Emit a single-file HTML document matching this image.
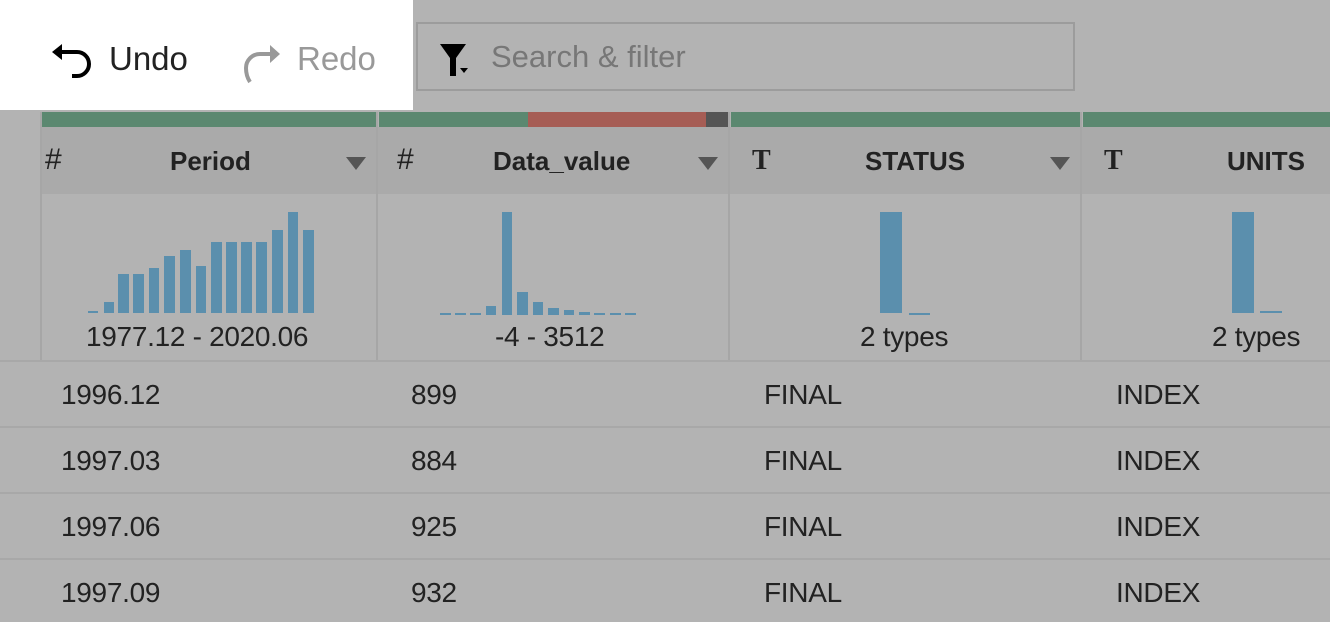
<!DOCTYPE html>
<html><head><style>
*{margin:0;padding:0;box-sizing:border-box}
body{width:1330px;height:622px;overflow:hidden;background:#b3b3b3;font-family:"Liberation Sans",sans-serif;position:relative;color:#222}
.abs{position:absolute}
.top{left:0;top:0;width:413px;height:110px;background:#fff}
.search{left:416px;top:22px;width:659px;height:69px;border:2px solid #9c9c9c}
.bar{top:112px;height:15px}
.hdr{top:127px;height:67px;background:#aaaaaa}
.vl{width:2px;background:#a6a6a6}
.hl{height:2px;background:#a8a8a8;left:0;width:1330px}
.t{font-size:26px;white-space:nowrap}
.r{font-size:28px;white-space:nowrap;letter-spacing:-0.3px}
.b{font-weight:bold}
.h{font-size:30px}
.tri{width:0;height:0;border-left:10px solid transparent;border-right:10px solid transparent;border-top:13px solid #555}
.hb{background:#5b8fad;position:absolute}
</style></head><body>
<div class="abs top"></div>
<svg class="abs" style="left:50px;top:42px" width="44" height="44" viewBox="0 0 44 44"><path d="M10 10 H27 A12 12 0 0 1 27 34 H22" fill="none" stroke="#000" stroke-width="4"/><path d="M2 10 L12 2 L12 18 Z" fill="#000"/></svg>
<div class="abs" style="left:109px;top:40px;font-size:33px;color:#222">Undo</div>
<svg class="abs" style="left:238px;top:42px" width="44" height="44" viewBox="0 0 44 44"><path d="M34 12 H22 A14 14 0 0 0 8 26 Q8 34 12 40" fill="none" stroke="#999" stroke-width="4"/><path d="M42 12 L32 3 L32 21 Z" fill="#999"/></svg>
<div class="abs" style="left:297px;top:40px;font-size:33px;color:#999">Redo</div>
<div class="abs search"></div>
<svg class="abs" style="left:440px;top:42px" width="30" height="36" viewBox="0 0 30 36"><path d="M0 2 H26 L16 16 V34 H10 V16 Z" fill="#000"/><path d="M20 26 L28 26 L24 31 Z" fill="#000"/></svg>
<div class="abs" style="left:491px;top:39px;font-size:31px;color:#777">Search &amp; filter</div>

<div class="abs bar" style="left:42px;width:334px;background:#5b8870"></div>
<div class="abs bar" style="left:379px;width:149px;background:#5b8870"></div>
<div class="abs bar" style="left:528px;width:178px;background:#a65d55"></div>
<div class="abs bar" style="left:706px;width:22px;background:#555"></div>
<div class="abs bar" style="left:731px;width:349px;background:#5b8870"></div>
<div class="abs bar" style="left:1083px;width:247px;background:#5b8870"></div>

<div class="abs hdr" style="left:41px;width:1289px"></div>
<div class="abs vl" style="left:40px;top:112px;height:249px"></div>
<div class="abs vl" style="left:376px;top:112px;height:249px"></div>
<div class="abs vl" style="left:728px;top:112px;height:249px"></div>
<div class="abs vl" style="left:1080px;top:112px;height:249px"></div>

<div class="abs t h" style="left:45px;top:143px">#</div>
<div class="abs t b" style="left:170px;top:146px">Period</div>
<div class="abs tri" style="left:346px;top:157px"></div>
<div class="abs t h" style="left:397px;top:143px">#</div>
<div class="abs t b" style="left:493px;top:146px">Data_value</div>
<div class="abs tri" style="left:698px;top:157px"></div>
<div class="abs t b" style="left:752px;top:145px;font-family:'Liberation Serif',serif;font-size:28px">T</div>
<div class="abs t b" style="left:865px;top:146px">STATUS</div>
<div class="abs tri" style="left:1050px;top:157px"></div>
<div class="abs t b" style="left:1104px;top:145px;font-family:'Liberation Serif',serif;font-size:28px">T</div>
<div class="abs t b" style="left:1227px;top:146px">UNITS</div>

<div class="hb" style="left:88px;top:311px;width:10px;height:2px"></div>
<div class="hb" style="left:104px;top:302px;width:10px;height:11px"></div>
<div class="hb" style="left:118px;top:274px;width:11px;height:39px"></div>
<div class="hb" style="left:133px;top:274px;width:11px;height:39px"></div>
<div class="hb" style="left:149px;top:268px;width:10px;height:45px"></div>
<div class="hb" style="left:164px;top:256px;width:11px;height:57px"></div>
<div class="hb" style="left:180px;top:250px;width:11px;height:63px"></div>
<div class="hb" style="left:196px;top:266px;width:10px;height:47px"></div>
<div class="hb" style="left:211px;top:242px;width:11px;height:71px"></div>
<div class="hb" style="left:226px;top:242px;width:11px;height:71px"></div>
<div class="hb" style="left:241px;top:242px;width:11px;height:71px"></div>
<div class="hb" style="left:256px;top:242px;width:11px;height:71px"></div>
<div class="hb" style="left:272px;top:230px;width:11px;height:83px"></div>
<div class="hb" style="left:288px;top:212px;width:10px;height:101px"></div>
<div class="hb" style="left:303px;top:230px;width:11px;height:83px"></div>
<div class="abs r" style="left:86px;top:321px">1977.12 - 2020.06</div>
<div class="hb" style="left:440px;top:313px;width:11px;height:2px"></div>
<div class="hb" style="left:455px;top:313px;width:11px;height:2px"></div>
<div class="hb" style="left:470px;top:313px;width:11px;height:2px"></div>
<div class="hb" style="left:486px;top:306px;width:10px;height:9px"></div>
<div class="hb" style="left:502px;top:212px;width:10px;height:103px"></div>
<div class="hb" style="left:517px;top:292px;width:11px;height:23px"></div>
<div class="hb" style="left:533px;top:302px;width:10px;height:13px"></div>
<div class="hb" style="left:548px;top:308px;width:11px;height:7px"></div>
<div class="hb" style="left:564px;top:310px;width:10px;height:5px"></div>
<div class="hb" style="left:579px;top:312px;width:11px;height:3px"></div>
<div class="hb" style="left:594px;top:313px;width:11px;height:2px"></div>
<div class="hb" style="left:610px;top:313px;width:11px;height:2px"></div>
<div class="hb" style="left:625px;top:313px;width:11px;height:2px"></div>
<div class="abs r" style="left:495px;top:321px">-4 - 3512</div>
<div class="hb" style="left:880px;top:212px;width:22px;height:101px"></div>
<div class="hb" style="left:909px;top:313px;width:21px;height:2px"></div>
<div class="abs r" style="left:860px;top:321px">2 types</div>
<div class="hb" style="left:1232px;top:212px;width:22px;height:101px"></div>
<div class="hb" style="left:1260px;top:311px;width:22px;height:2px"></div>
<div class="abs r" style="left:1212px;top:321px">2 types</div>

<div class="abs hl" style="top:360px"></div>
<div class="abs hl" style="top:426px"></div>
<div class="abs hl" style="top:492px"></div>
<div class="abs hl" style="top:558px"></div>

<div class="abs r" style="left:61px;top:379px">1996.12</div>
<div class="abs r" style="left:411px;top:379px">899</div>
<div class="abs r" style="left:764px;top:379px">FINAL</div>
<div class="abs r" style="left:1116px;top:379px">INDEX</div>
<div class="abs r" style="left:61px;top:445px">1997.03</div>
<div class="abs r" style="left:411px;top:445px">884</div>
<div class="abs r" style="left:764px;top:445px">FINAL</div>
<div class="abs r" style="left:1116px;top:445px">INDEX</div>
<div class="abs r" style="left:61px;top:511px">1997.06</div>
<div class="abs r" style="left:411px;top:511px">925</div>
<div class="abs r" style="left:764px;top:511px">FINAL</div>
<div class="abs r" style="left:1116px;top:511px">INDEX</div>
<div class="abs r" style="left:61px;top:577px">1997.09</div>
<div class="abs r" style="left:411px;top:577px">932</div>
<div class="abs r" style="left:764px;top:577px">FINAL</div>
<div class="abs r" style="left:1116px;top:577px">INDEX</div>
</body></html>
